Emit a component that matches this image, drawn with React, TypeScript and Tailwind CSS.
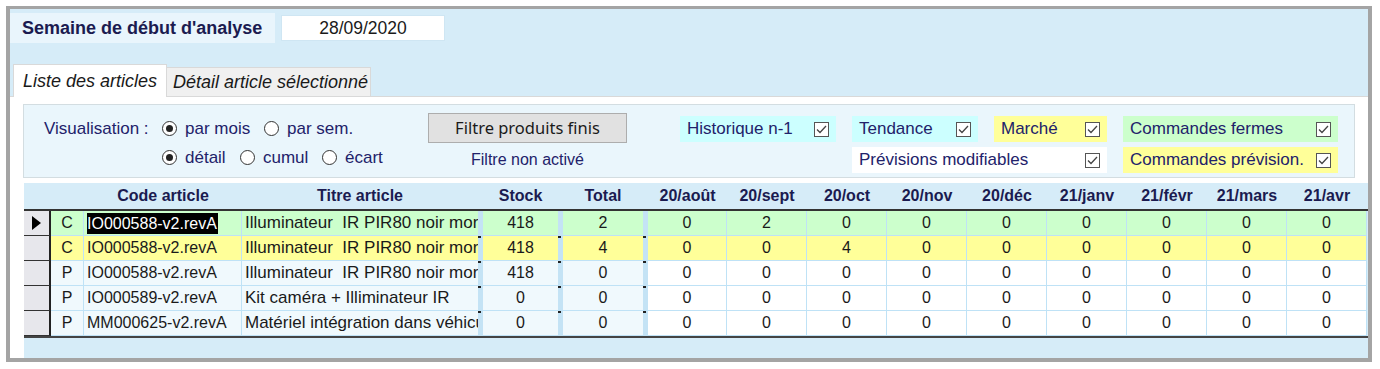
import React from 'react';

const months = ['20/août', '20/sept', '20/oct', '20/nov', '20/déc', '21/janv', '21/févr', '21/mars', '21/avr'];

type Row = {
  type: string;
  code: string;
  title: string;
  stock: string;
  total: string;
  vals: number[];
  tone: 'green' | 'yellow' | 'plain';
  current?: boolean;
};

const rows: Row[] = [
  { type: 'C', code: 'IO000588-v2.revA', title: 'Illuminateur  IR PIR80 noir mor', stock: '418', total: '2', vals: [0, 2, 0, 0, 0, 0, 0, 0, 0], tone: 'green', current: true },
  { type: 'C', code: 'IO000588-v2.revA', title: 'Illuminateur  IR PIR80 noir mor', stock: '418', total: '4', vals: [0, 0, 4, 0, 0, 0, 0, 0, 0], tone: 'yellow' },
  { type: 'P', code: 'IO000588-v2.revA', title: 'Illuminateur  IR PIR80 noir mor', stock: '418', total: '0', vals: [0, 0, 0, 0, 0, 0, 0, 0, 0], tone: 'plain' },
  { type: 'P', code: 'IO000589-v2.revA', title: 'Kit caméra + Illiminateur IR', stock: '0', total: '0', vals: [0, 0, 0, 0, 0, 0, 0, 0, 0], tone: 'plain' },
  { type: 'P', code: 'MM000625-v2.revA', title: 'Matériel intégration dans véhicule', stock: '0', total: '0', vals: [0, 0, 0, 0, 0, 0, 0, 0, 0], tone: 'plain' },
];

const GRID = 'grid grid-cols-[27px_33px_158px_236px_5px_75px_5px_80px_5px_79px_repeat(8,80px)]';

function Radio({ checked, label }: { checked?: boolean; label: string }) {
  return (
    <div className="flex items-center gap-[8px]">
      <span className="w-[15px] h-[15px] rounded-full border border-[#333] bg-white flex items-center justify-center">
        {checked && <span className="w-[7px] h-[7px] rounded-full bg-[#222]" />}
      </span>
      <span>{label}</span>
    </div>
  );
}

function Check({ label, bg, className = '' }: { label: string; bg: string; className?: string }) {
  return (
    <div className={`flex items-center justify-between h-[26px] pl-[7px] pr-[7px] ${bg} ${className}`}>
      <span>{label}</span>
      <span className="w-[15px] h-[15px] border border-[#555] bg-white flex items-center justify-center">
        <svg width="11" height="9" viewBox="0 0 11 9">
          <path d="M1 4.5 L4 7.5 L10 1" fill="none" stroke="#444" strokeWidth="1.3" />
        </svg>
      </span>
    </div>
  );
}

function Sep({ dash }: { dash?: boolean }) {
  return (
    <div className="bg-[#c4e3f5] border-b border-[#bfe2f6] flex flex-col">
      {dash && <span className="w-[3px] h-[2px] bg-[#222]" />}
    </div>
  );
}

export default function App() {
  return (
    <div className="w-[1380px] h-[369px] bg-white pl-[6px] pt-[6px] font-['Liberation_Sans',Arial,sans-serif]">
      <div className="w-[1366px] h-[356px] border-4 border-t-[3px] border-[#a4a4a4] bg-[#d6ecf8] flex flex-col overflow-hidden">
        {/* Header */}
        <div className="flex items-center mt-[4px] h-[30px]">
          <div className="w-[265px] h-full bg-[#e9f5fc] pl-[12px] flex items-center text-[18px] font-bold text-[#1b1b50]">
            Semaine de début d'analyse
          </div>
          <div className="ml-[6px] w-[164px] h-[26px] bg-white border border-[#cfe6f3] flex items-center justify-center text-[17.5px] text-[#1a1a1a]">
            28/09/2020
          </div>
        </div>

        {/* Tabs */}
        <div className="flex items-end mt-[21px] h-[32px] text-[18px] italic text-[#1a1a1a]">
          <div className="relative z-10 ml-[3px] w-[154px] h-[33px] -mb-px bg-white border border-b-0 border-[#d9d9d9] pl-[9px] flex items-center">
            Liste des articles
          </div>
          <div className="w-[204px] h-[29px] bg-[#f0f0f0] border border-b-0 border-l-0 border-[#d9d9d9] pl-[6px] flex items-center">
            Détail article sélectionné
          </div>
        </div>

        {/* Tab panel */}
        <div className="flex-1 bg-white border-t border-[#d9d9d9] pl-[13px] pt-[7px] flex flex-col min-h-0">
          {/* Filters */}
          <div className="w-[1332px] h-[74px] bg-[#eaf6fc] border border-[#d3dde1] flex items-start text-[17px] text-[#22226a]">
            <div className="w-[404px] pl-[20px] pt-[9px]">
              <div className="flex items-center h-[29px]">
                <span className="w-[118px]">Visualisation :</span>
                <div className="w-[102px]"><Radio checked label="par mois" /></div>
                <Radio label="par sem." />
              </div>
              <div className="flex items-center h-[29px] pl-[118px]">
                <div className="w-[78px]"><Radio checked label="détail" /></div>
                <div className="w-[82px]"><Radio label="cumul" /></div>
                <Radio label="écart" />
              </div>
            </div>
            <div className="w-[199px] flex flex-col items-center pt-[8px]">
              <button className="w-[199px] h-[30px] bg-[#e1e1e1] border border-[#adadad] text-[16.5px] text-[#1a1a1a] font-['Noto_Sans',Arial,sans-serif]">
                Filtre produits finis
              </button>
              <span className="mt-[7px] text-[16px] leading-[20px]">Filtre non activé</span>
            </div>
            <div className="ml-[53px] pt-[11px] grid grid-cols-[156px_126px_113px_215px] gap-x-[16px] gap-y-[5px]">
              <Check label="Historique n-1" bg="bg-[#ccffff]" />
              <Check label="Tendance" bg="bg-[#ccffff]" />
              <Check label="Marché" bg="bg-[#ffff99]" />
              <Check label="Commandes fermes" bg="bg-[#ccffcc]" />
              <Check label="Prévisions modifiables" bg="bg-white" className="col-start-2 col-span-2" />
              <Check label="Commandes prévision." bg="bg-[#ffff99]" className="pr-[6px]" />
            </div>
          </div>

          {/* Grid */}
          <div className="mt-[5px] ml-px flex-1 bg-[#d6ecf8] text-[16px]">
            <div className={`${GRID} h-[28px] border-b-2 border-[#333] font-bold text-[#1b1b50]`}>
              <div />
              <div />
              <div className="flex items-center justify-center">Code article</div>
              <div className="flex items-center justify-center">Titre article</div>
              <div />
              <div className="flex items-center justify-center">Stock</div>
              <div />
              <div className="flex items-center justify-center">Total</div>
              <div />
              {months.map((m) => (
                <div key={m} className="flex items-center justify-center">{m}</div>
              ))}
            </div>
            <div className="border-b-2 border-[#444]">
              {rows.map((r, i) => {
                const fixedBg = r.tone === 'green' ? 'bg-[#ccffcc]' : r.tone === 'yellow' ? 'bg-[#ffff99]' : 'bg-[#f0f9fd]';
                const monthBg = r.tone === 'green' ? 'bg-[#ccffcc]' : r.tone === 'yellow' ? 'bg-[#ffff99]' : 'bg-white';
                const cell = 'flex items-center border-r border-b border-[#bfe2f6] overflow-hidden whitespace-pre text-[#1a1a1a]';
                return (
                  <div key={i} className={`${GRID} h-[25px]`}>
                    <div className="bg-[#e7e7ec] border-r-2 border-b border-r-[#222] border-b-[#333] flex items-center justify-center">
                      {r.current && (
                        <svg width="9" height="14" viewBox="0 0 9 14">
                          <path d="M0 0 L9 7 L0 14 Z" fill="#000" />
                        </svg>
                      )}
                    </div>
                    <div className={`${cell} ${fixedBg} justify-center`}>{r.type}</div>
                    <div className={`${cell} ${fixedBg} pl-[3px]`}>
                      {r.current ? <span className="bg-black text-white leading-[21px] pr-px">{r.code}</span> : r.code}
                    </div>
                    <div className={`${cell} ${fixedBg} pl-[3px] border-r-0 text-[17px]`}>{r.title}</div>
                    <Sep dash={i > 0} />
                    <div className={`${cell} ${fixedBg} justify-center border-r-0`}>{r.stock}</div>
                    <Sep dash={i > 0} />
                    <div className={`${cell} ${fixedBg} justify-center border-r-0`}>{r.total}</div>
                    <Sep dash={i > 0} />
                    {r.vals.map((v, j) => (
                      <div key={j} className={`${cell} ${monthBg} justify-center`}>{v}</div>
                    ))}
                  </div>
                );
              })}
            </div>
          </div>
        </div>
      </div>
    </div>
  );
}
